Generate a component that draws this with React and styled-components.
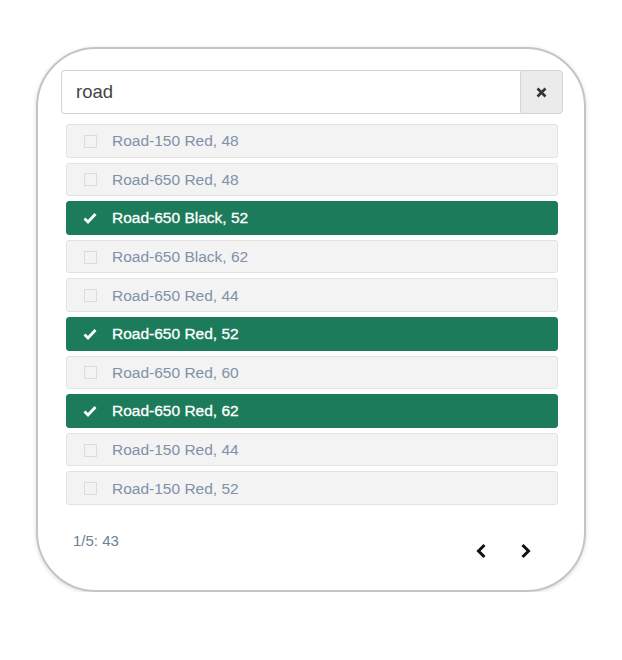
import React, { useState } from "react";
import styled, { createGlobalStyle } from "styled-components";

const GlobalStyle = createGlobalStyle`
  body {
    margin: 0;
    background: #ffffff;
    font-family: "Liberation Sans", Arial, sans-serif;
  }
`;

const items = [
  { name: "Road-150 Red, 48", checked: false },
  { name: "Road-650 Red, 48", checked: false },
  { name: "Road-650 Black, 52", checked: true },
  { name: "Road-650 Black, 62", checked: false },
  { name: "Road-650 Red, 44", checked: false },
  { name: "Road-650 Red, 52", checked: true },
  { name: "Road-650 Red, 60", checked: false },
  { name: "Road-650 Red, 62", checked: true },
  { name: "Road-150 Red, 44", checked: false },
  { name: "Road-150 Red, 52", checked: false },
];

function CheckIcon() {
  return (
    <svg width="14" height="12" viewBox="0 0 14 12">
      <path
        d="M1.5 6.5 L5 10 L12.5 2"
        fill="none"
        stroke="#ffffff"
        strokeWidth="2.8"
        strokeLinejoin="miter"
      />
    </svg>
  );
}

function Chevron({ dir }) {
  const d = dir === "left" ? "M9.5 2 L3.5 8 L9.5 14" : "M2.5 2 L8.5 8 L2.5 14";
  return (
    <svg width="12" height="16" viewBox="0 0 12 16">
      <path d={d} fill="none" stroke="#111111" strokeWidth="3" />
    </svg>
  );
}

function App() {
  const [query, setQuery] = useState("road");
  const [list, setList] = useState(items);

  const toggle = (i) => {
    setList(list.map((it, idx) => (idx === i ? { ...it, checked: !it.checked } : it)));
  };

  return (
    <Page>
      <GlobalStyle />
      <Card>
        <InputGroup>
          <SearchInput value={query} onChange={(e) => setQuery(e.target.value)} />
          <ClearButton onClick={() => setQuery("")}>
            <svg width="11" height="11" viewBox="0 0 11 11">
              <path d="M1.5 1.5 L9.5 9.5 M9.5 1.5 L1.5 9.5" stroke="#333" strokeWidth="2.6" />
            </svg>
          </ClearButton>
        </InputGroup>
        <List>
          {list.map((it, i) => (
            <Item key={i} $checked={it.checked} onClick={() => toggle(i)}>
              <Mark>{it.checked ? <CheckIcon /> : <Box />}</Mark>
              <Label $checked={it.checked}>{it.name}</Label>
            </Item>
          ))}
        </List>
        <Footer>
          <Count>1/5: 43</Count>
          <Pager>
            <PageButton>
              <Chevron dir="left" />
            </PageButton>
            <PageButton>
              <Chevron dir="right" />
            </PageButton>
          </Pager>
        </Footer>
      </Card>
    </Page>
  );
}

const Page = styled.div`
  padding: 47px 0 0 36px;
`;

const Card = styled.div`
  width: 550px;
  height: 545px;
  box-sizing: border-box;
  border: 2px solid #c4c4c4;
  border-radius: 60px;
  box-shadow: 0 1px 4px rgba(0, 0, 0, 0.15);
  padding: 21px 21px 0 23px;
`;

const InputGroup = styled.div`
  display: flex;
  height: 44px;
`;

const SearchInput = styled.input`
  flex: 1;
  min-width: 0;
  box-sizing: border-box;
  height: 44px;
  border: 1px solid #d4d4d4;
  border-right: none;
  border-radius: 4px 0 0 4px;
  padding: 0 14px;
  font-family: "Liberation Sans", Arial, sans-serif;
  font-size: 18.5px;
  color: #444;
  outline: none;
`;

const ClearButton = styled.button`
  width: 43px;
  height: 44px;
  box-sizing: border-box;
  border: 1px solid #d4d4d4;
  border-radius: 0 4px 4px 0;
  background: #ebebeb;
  display: flex;
  align-items: center;
  justify-content: center;
  padding: 0;
  cursor: pointer;
`;

const List = styled.div`
  display: flex;
  flex-direction: column;
  gap: 5px;
  padding: 10px 5px 0;
`;

const Item = styled.div`
  height: 33.6px;
  box-sizing: border-box;
  display: flex;
  align-items: center;
  border: 1px solid ${(p) => (p.$checked ? "#1b7b5a" : "#e2e2e2")};
  background: ${(p) => (p.$checked ? "#1b7b5a" : "#f3f3f3")};
  border-radius: 3px;
  padding: 1px 0 0 15px;
  cursor: pointer;
`;

const Mark = styled.span`
  width: 16px;
  height: 14px;
  display: flex;
  align-items: center;
  justify-content: center;
  margin-right: 14px;
`;

const Box = styled.span`
  width: 13px;
  height: 13px;
  box-sizing: border-box;
  border: 1px solid #dcdcdc;
  background: #f3f3f3;
`;

const Label = styled.span`
  font-size: 15.5px;
  color: ${(p) => (p.$checked ? "#ffffff" : "#8091a8")};
  -webkit-text-stroke: ${(p) => (p.$checked ? "0.3px #ffffff" : "0")};
`;

const Footer = styled.div`
  display: flex;
  justify-content: space-between;
  padding: 27px 31px 0 12px;
`;

const Count = styled.span`
  font-size: 15px;
  color: #6e7f96;
  line-height: 17px;
`;

const Pager = styled.div`
  display: flex;
  gap: 33px;
  padding-top: 11px;
`;

const PageButton = styled.span`
  display: flex;
  cursor: pointer;
`;

export default App;
